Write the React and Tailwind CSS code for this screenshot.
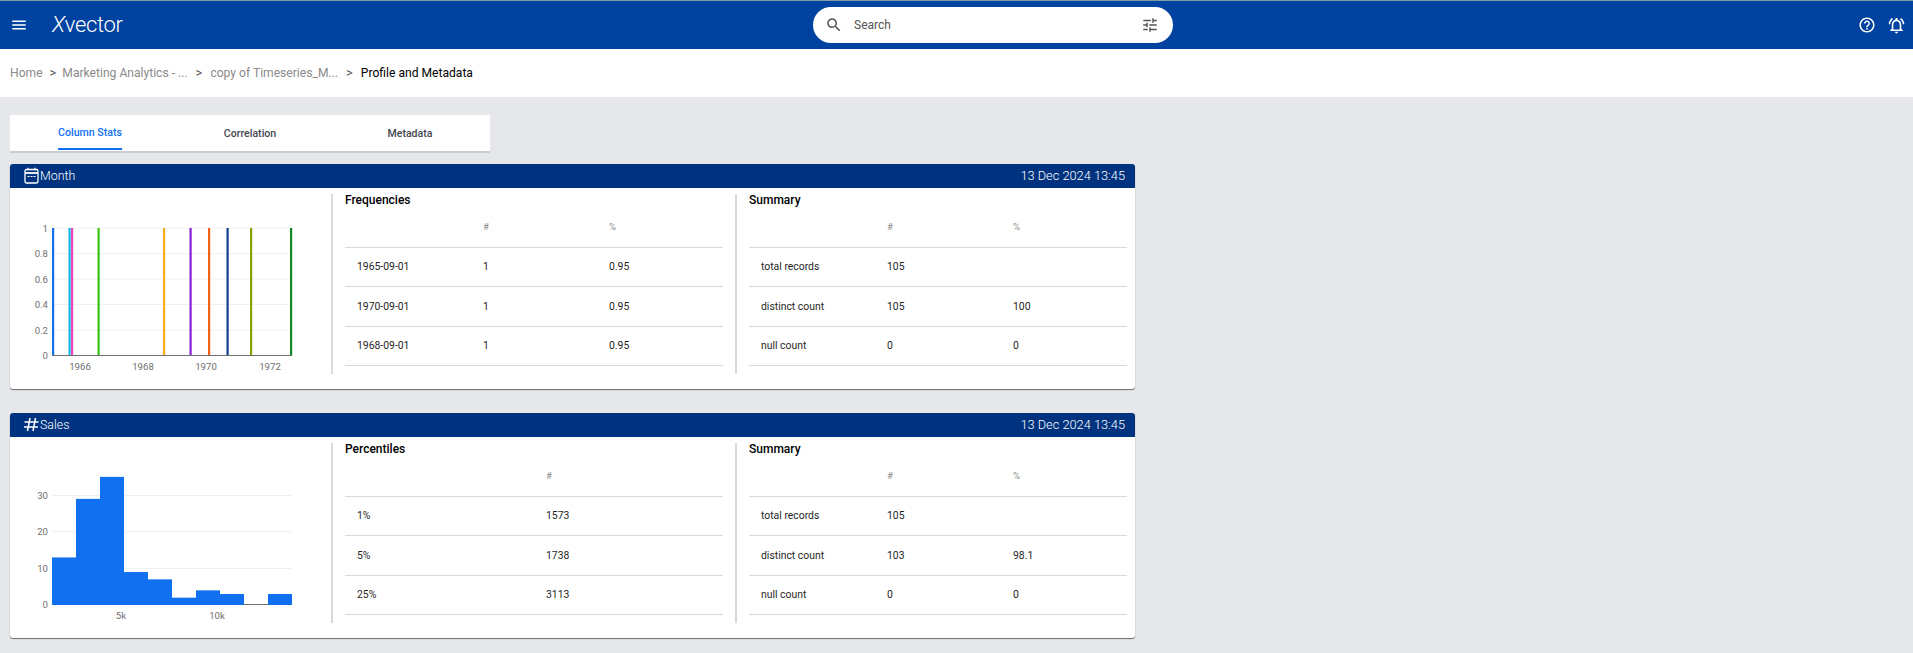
import React from "react";

const monthBars = [
  [52, "#1170f0"],
  [68.5, "#12b5e6"],
  [71, "#ee46bc"],
  [97.5, "#35c20f"],
  [163, "#f9ad1e"],
  [189.5, "#8a1fd8"],
  [208, "#fa5f17"],
  [226.5, "#0d3f8f"],
  [250, "#8ca100"],
  [290, "#0f8a2a"],
];

const salesBars = [13, 29, 35, 9, 7, 2, 4, 3, 0, 3];

function Icon({ d, className }) {
  return (
    <svg viewBox="0 0 24 24" fill="currentColor" className={className}>
      <path d={d} />
    </svg>
  );
}

function CalendarIcon() {
  return (
    <svg viewBox="0 0 15 17" className="h-[17px] w-[15px] text-white" fill="none" stroke="currentColor">
      <rect x="1" y="2.5" width="13" height="13.5" rx="1.5" strokeWidth="1.3" />
      <path d="M1 6h13" strokeWidth="1.8" />
      <path d="M4 0.8v2.5M11 0.8v2.5" strokeWidth="1.2" />
      <path d="M3.5 9.5h2M6.5 9.5h2M9.5 9.5h2" strokeWidth="1.2" />
    </svg>
  );
}

function HashIcon() {
  return (
    <svg viewBox="0 0 15 15" className="h-[15px] w-[15px] text-white" fill="none" stroke="currentColor" strokeWidth="1.5">
      <path d="M0.5 5h14M0 10h14M6 1 3.5 14M11.5 1 9 14" />
    </svg>
  );
}

function MonthChart() {
  const ticks = [
    ["1", 228],
    ["0.8", 253.5],
    ["0.6", 279],
    ["0.4", 304.5],
    ["0.2", 330],
  ];
  return (
    <svg viewBox="10 194 321 180" className="h-[180px] w-[321px] shrink-0">
      {ticks.map(([label, y]) => (
        <g key={label}>
          <line x1="52" x2="292" y1={y} y2={y} stroke="#f0f0f0" />
          <text x="48" y={y + 3.5} textAnchor="end" fontSize="9.6" fill="#6f6f6f">
            {label}
          </text>
        </g>
      ))}
      <text x="48" y="359" textAnchor="end" fontSize="9.6" fill="#6f6f6f">
        0
      </text>
      {monthBars.map(([x, color]) => (
        <rect key={x} x={x} y="228" width="2.2" height="127" fill={color} />
      ))}
      <line x1="52" x2="292" y1="355.5" y2="355.5" stroke="#6f6f6f" />
      {[
        ["1966", 80],
        ["1968", 143],
        ["1970", 206],
        ["1972", 270],
      ].map(([label, x]) => (
        <text key={label} x={x} y="369.5" textAnchor="middle" fontSize="9.6" fill="#6f6f6f">
          {label}
        </text>
      ))}
    </svg>
  );
}

function SalesChart() {
  return (
    <svg viewBox="10 443 321 180" className="h-[180px] w-[321px] shrink-0">
      {[
        ["30", 495.5],
        ["20", 531.5],
        ["10", 568.5],
      ].map(([label, y]) => (
        <g key={label}>
          <line x1="52" x2="292" y1={y} y2={y} stroke="#f0f0f0" />
          <text x="48" y={y + 3} textAnchor="end" fontSize="9.6" fill="#6f6f6f">
            {label}
          </text>
        </g>
      ))}
      <text x="48" y="608" textAnchor="end" fontSize="9.6" fill="#6f6f6f">
        0
      </text>
      <line x1="52" x2="292" y1="604.5" y2="604.5" stroke="#6f6f6f" />
      {salesBars.map((v, i) => (
        <rect key={i} x={52 + i * 24} y={605 - v * 3.66} width="24" height={v * 3.66} fill="#1170f0" />
      ))}
      <text x="121" y="618.5" textAnchor="middle" fontSize="9.6" fill="#6f6f6f">
        5k
      </text>
      <text x="217" y="618.5" textAnchor="middle" fontSize="9.6" fill="#6f6f6f">
        10k
      </text>
    </svg>
  );
}

function StatTable({ title, columns, rows, className }) {
  const grid = columns.length === 2 ? "grid-cols-2" : "grid-cols-3";
  return (
    <div className={`flex h-[180px] flex-col border-l-2 border-[#d9d9d9] pl-3 ${className}`}>
      <h4 className="h-[13px] text-[12px] leading-[12.5px] font-medium text-black">{title}</h4>
      <div className={`grid h-[41px] ${grid} items-center border-b border-[#d9d9d9] text-[9.6px] text-[#8a8a8a]`}>
        {["", ...columns.slice(1)].map((c, i) => (
          <span key={i} className="pl-3">
            {c}
          </span>
        ))}
      </div>
      {rows.map((row) => (
        <div
          key={row[0]}
          className={`grid h-[39.3px] ${grid} items-center border-b border-[#d9d9d9] text-[10.4px] text-[#1f1f1f]`}
        >
          {row.map((cell, i) => (
            <span key={i} className="pl-3">
              {cell}
            </span>
          ))}
        </div>
      ))}
    </div>
  );
}

function ProfileCard({ icon, name, chart, table, summary }) {
  return (
    <section className="w-[1125px] rounded-[3px] bg-white shadow-[0_1px_1px_rgba(0,0,0,0.55)]">
      <header className="flex h-[24px] items-center justify-between rounded-t-[3px] bg-[#00337f] pr-[10px] pl-[14px] text-[12.8px] font-light text-white">
        <div className="flex items-center gap-[1px]">
          {icon}
          <span className="text-[12.4px]">{name}</span>
        </div>
        <span>13 Dec 2024 13:45</span>
      </header>
      <div className="flex pt-[6px] pb-[15px]">
        {chart}
        <StatTable {...table} className="w-[404px] pr-3" />
        <StatTable title="Summary" columns={["", "#", "%"]} rows={summary} className="w-[392px] pr-0" />
      </div>
    </section>
  );
}

export default function App() {
  return (
    <div className="flex min-h-[653px] flex-col bg-[#e6e7eb] font-['Roboto',sans-serif]">
      <nav className="relative flex h-[49px] items-center border-t border-[#7da0a8] bg-[#00429f] text-white">
        <Icon d="M3 18h18v-2H3v2zm0-5h18v-2H3v2zm0-7v2h18V6H3z" className="ml-[10px] h-[18px] w-[18px]" />
        <span className="ml-[24px] text-[22px] leading-none font-light tracking-[-0.3px]">
          <span className="italic">X</span>vector
        </span>
        <div className="absolute top-[6px] left-[813px] flex h-[36px] w-[360px] items-center rounded-full bg-white pr-[14px] pl-[12px] text-[#555]">
          <Icon
            d="M15.5 14h-.79l-.28-.27C15.41 12.59 16 11.11 16 9.5 16 5.91 13.09 3 9.5 3S3 5.91 3 9.5 5.91 16 9.5 16c1.61 0 3.09-.59 4.23-1.57l.27.28v.79l5 4.99L20.49 19l-4.99-5zm-6 0C7.01 14 5 11.99 5 9.5S7.01 5 9.5 5 14 7.01 14 9.5 11.99 14 9.5 14z"
            className="h-[18px] w-[18px]"
          />
          <span className="ml-[11px] flex-1 text-[12px]">Search</span>
          <Icon
            d="M3 17v2h6v-2H3zM3 5v2h10V5H3zm10 16v-2h8v-2h-8v-2h-2v6h2zM7 9v2H3v2h4v2h2V9H7zm14 4v-2H11v2h10zm-6-4h2V7h4V5h-4V3h-2v6z"
            className="h-[18px] w-[18px]"
          />
        </div>
        <div className="ml-auto flex items-center gap-[11px] pr-[7px]">
          <Icon
            d="M11 18h2v-2h-2v2zm1-16C6.48 2 2 6.48 2 12s4.48 10 10 10 10-4.48 10-10S17.52 2 12 2zm0 18c-4.41 0-8-3.59-8-8s3.59-8 8-8 8 3.59 8 8-3.59 8-8 8zm0-14c-2.21 0-4 1.79-4 4h2c0-1.1.9-2 2-2s2 .9 2 2c0 2-3 1.75-3 5h2c0-2.25 3-2.5 3-5 0-2.21-1.79-4-4-4z"
            className="h-[18px] w-[18px]"
          />
          <Icon
            d="M7.58 4.08 6.15 2.65C3.75 4.48 2.17 7.3 2.03 10.5h2c.15-2.65 1.51-4.97 3.55-6.42zm12.39 6.42h2c-.15-3.2-1.73-6.02-4.12-7.85l-1.42 1.43c2.02 1.45 3.39 3.77 3.54 6.42zM18 11c0-3.07-1.64-5.64-4.5-6.32V4c0-.83-.67-1.5-1.5-1.5s-1.5.67-1.5 1.5v.68C7.63 5.36 6 7.92 6 11v5l-2 2v1h16v-1l-2-2v-5zm-2 6H8v-6c0-2.48 1.51-4.5 4-4.5s4 2.02 4 4.5v6zm-4 5c.14 0 .27-.01.4-.04.65-.14 1.18-.58 1.44-1.18.1-.24.15-.5.15-.78h-4c.01 1.1.9 2 2.01 2z"
            className="h-[19px] w-[19px]"
          />
        </div>
      </nav>

      <div className="flex h-[48px] items-center bg-white pl-[10px] text-[12.1px] text-[#8a8a8a]">
        <span>Home</span>
        <span className="mr-[6px] ml-[7px] text-[13px] text-[#555]">&gt;</span>
        <span>Marketing Analytics - ...</span>
        <span className="mx-[8px] text-[13px] text-[#555]">&gt;</span>
        <span>copy of Timeseries_M...</span>
        <span className="mx-[8px] text-[13px] text-[#555]">&gt;</span>
        <span className="text-black">Profile and Metadata</span>
      </div>

      <main className="flex flex-col pt-[18px] pl-[10px]">
        <div className="flex h-[38px] w-[480px] border-b-2 border-[#c9ccd4] bg-white text-[10.6px] font-medium">
          <div className="flex flex-1 justify-center">
            <span className="flex h-[35px] items-center border-b-2 border-[#1170f0] pt-[3px] text-[#1170f0]">Column Stats</span>
          </div>
          <div className="flex flex-1 items-center justify-center pt-[1px] text-[#44474f]">Correlation</div>
          <div className="flex flex-1 items-center justify-center pt-[1px] text-[#44474f]">Metadata</div>
        </div>

        <div className="mt-[11px] flex flex-col gap-[24px]">
          <ProfileCard
            icon={<CalendarIcon />}
            name="Month"
            chart={<MonthChart />}
            table={{
              title: "Frequencies",
              columns: ["", "#", "%"],
              rows: [
                ["1965-09-01", "1", "0.95"],
                ["1970-09-01", "1", "0.95"],
                ["1968-09-01", "1", "0.95"],
              ],
            }}
            summary={[
              ["total records", "105", ""],
              ["distinct count", "105", "100"],
              ["null count", "0", "0"],
            ]}
          />
          <ProfileCard
            icon={<HashIcon />}
            name="Sales"
            chart={<SalesChart />}
            table={{
              title: "Percentiles",
              columns: ["", "#"],
              rows: [
                ["1%", "1573"],
                ["5%", "1738"],
                ["25%", "3113"],
              ],
            }}
            summary={[
              ["total records", "105", ""],
              ["distinct count", "103", "98.1"],
              ["null count", "0", "0"],
            ]}
          />
        </div>
      </main>
    </div>
  );
}
